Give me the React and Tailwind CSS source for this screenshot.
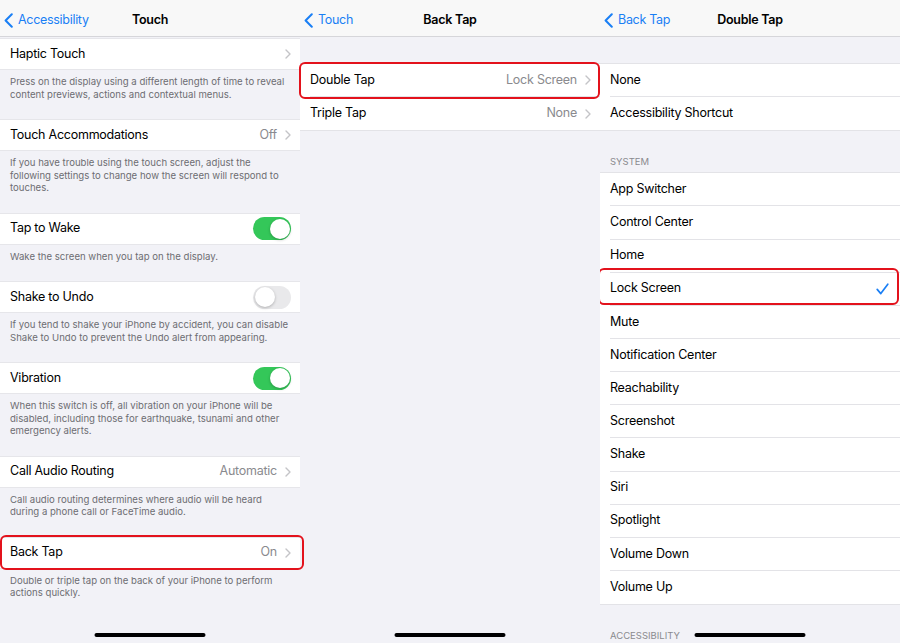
const blue = "text-[#1a7ff5]";
const label = "text-[12.5px] tracking-[-0.25px]";

function BackChevron() {
  return (
    <svg width="9" height="15" viewBox="0 0 9 15" fill="none" className="mr-[5px] shrink-0">
      <path d="M7.8 1.2 L1.6 7.5 L7.8 13.8" stroke="#1a7ff5" strokeWidth="2" strokeLinecap="round" strokeLinejoin="round" />
    </svg>
  );
}

function Chevron() {
  return (
    <svg width="6" height="10" viewBox="0 0 6 10" fill="none" className="shrink-0">
      <path d="M1 1 L5 5 L1 9" stroke="#c4c4c7" strokeWidth="1.4" strokeLinecap="round" strokeLinejoin="round" />
    </svg>
  );
}

function Check() {
  return (
    <svg width="13" height="12" viewBox="0 0 13 12" fill="none">
      <path d="M1.2 6.4 L4.8 10.6 L11.8 1.2" stroke="#1a7ff5" strokeWidth="1.7" strokeLinecap="round" strokeLinejoin="round" />
    </svg>
  );
}

function NavBar({ back, title }) {
  return (
    <div className="grid h-[37px] grid-cols-[1fr_auto_1fr] items-center border-b border-[#d6d6da] bg-[#f8f8f8] px-[4px] pt-[5px]">
      <div className={`flex items-center text-[12.5px] tracking-[-0.3px] ${blue}`}>
        <BackChevron />
        {back}
      </div>
      <div className="text-[12.5px] font-semibold tracking-[-0.25px] text-black">{title}</div>
      <div />
    </div>
  );
}

function Toggle({ on }) {
  return (
    <div
      className={
        on
          ? "flex h-[23px] w-[38px] items-center justify-end rounded-full bg-[#34c759] p-[1.5px]"
          : "flex h-[23px] w-[38px] items-center justify-start rounded-full bg-[#e9e9eb] p-[1.5px]"
      }
    >
      <div className="h-[20px] w-[20px] rounded-full bg-white shadow-[0_1px_3px_rgba(0,0,0,0.25)]" />
    </div>
  );
}

function RedBox({ className }) {
  return <div className={`pointer-events-none absolute z-10 rounded-[6px] border-2 border-[#e3121c] ${className}`} />;
}

function Footer({ children }) {
  return (
    <div className="pb-[18px] pl-[10px] pr-[9px] pt-[6px] text-[9.6px] leading-[12.5px] text-[#6d6d72]">{children}</div>
  );
}

function TouchRow({ label: text, value, toggle, chevron, box }) {
  return (
    <div className="relative flex h-[32px] items-center justify-between border-y border-[#e6e6ea] bg-white pl-[10px] pr-[9px]">
      <span className={`${label} text-black`}>{text}</span>
      {toggle !== undefined ? (
        <Toggle on={toggle} />
      ) : (
        <div className="flex items-center gap-[8px]">
          {value && <span className={`${label} text-[#8a8a8e]`}>{value}</span>}
          {chevron && <Chevron />}
        </div>
      )}
      {box && <RedBox className="-top-[3px] -bottom-[2px] left-0 -right-[4px]" />}
    </div>
  );
}

function HomeBar() {
  return <div className="absolute bottom-[6px] left-1/2 h-[4px] w-[111px] -translate-x-1/2 rounded-full bg-black" />;
}

function TouchPanel() {
  return (
    <div className="relative h-[643px] w-[300px] shrink-0 bg-[#f2f2f7]">
      <NavBar back="Accessibility" title="Touch" />
      <div className="pt-[1px]">
        <TouchRow label="Haptic Touch" chevron />
        <Footer>
          Press on the display using a different length of time to reveal content previews, actions and contextual menus.
        </Footer>
        <TouchRow label="Touch Accommodations" value="Off" chevron />
        <Footer>
          If you have trouble using the touch screen, adjust the following settings to change how the screen will respond to
          touches.
        </Footer>
        <TouchRow label="Tap to Wake" toggle={true} />
        <Footer>Wake the screen when you tap on the display.</Footer>
        <TouchRow label="Shake to Undo" toggle={false} />
        <Footer>
          If you tend to shake your iPhone by accident, you can disable Shake to Undo to prevent the Undo alert from appearing.
        </Footer>
        <TouchRow label="Vibration" toggle={true} />
        <Footer>
          When this switch is off, all vibration on your iPhone will be disabled, including those for earthquake, tsunami and
          other emergency alerts.
        </Footer>
        <TouchRow label="Call Audio Routing" value="Automatic" chevron />
        <Footer>Call audio routing determines where audio will be heard during a phone call or FaceTime audio.</Footer>
        <TouchRow label="Back Tap" value="On" chevron box />
        <Footer>Double or triple tap on the back of your iPhone to perform actions quickly.</Footer>
      </div>
      <HomeBar />
    </div>
  );
}

function ListRow({ label: text, value, chevron, check, last, box }) {
  return (
    <div className="relative flex h-[33.15px] items-stretch bg-white pl-[10px]">
      <div
        className={`flex flex-1 items-center justify-between pr-[9px] ${last ? "" : "border-b border-[#e3e3e7]"}`}
      >
        <span className={`${label} text-black`}>{text}</span>
        <div className="flex items-center gap-[8px]">
          {value && <span className={`${label} text-[#8a8a8e]`}>{value}</span>}
          {chevron && <Chevron />}
          {check && (
            <div className="pr-[2px]">
              <Check />
            </div>
          )}
        </div>
      </div>
      {box}
    </div>
  );
}

function Group({ children }) {
  return <div className="border-y border-[#e3e3e7]">{children}</div>;
}

function BackTapPanel() {
  return (
    <div className="relative h-[643px] w-[300px] shrink-0 bg-[#f2f2f7]">
      <NavBar back="Touch" title="Back Tap" />
      <div className="pt-[26px]">
        <Group>
          <ListRow
            label="Double Tap"
            value="Lock Screen"
            chevron
            box={<RedBox className="-top-[2px] -bottom-[2px] -left-[1px] right-0" />}
          />
          <ListRow label="Triple Tap" value="None" chevron last />
        </Group>
      </div>
      <HomeBar />
    </div>
  );
}

const systemActions = [
  "App Switcher",
  "Control Center",
  "Home",
  "Lock Screen",
  "Mute",
  "Notification Center",
  "Reachability",
  "Screenshot",
  "Shake",
  "Siri",
  "Spotlight",
  "Volume Down",
  "Volume Up",
];

function SectionHeader({ children }) {
  return <div className="px-[10px] pb-[5px] pt-[26px] text-[9.5px] leading-[10px] text-[#8a8a8e]">{children}</div>;
}

function DoubleTapPanel() {
  return (
    <div className="relative h-[643px] w-[300px] shrink-0 overflow-hidden bg-[#f2f2f7]">
      <NavBar back="Back Tap" title="Double Tap" />
      <div className="pt-[26px]">
        <Group>
          <ListRow label="None" />
          <ListRow label="Accessibility Shortcut" last />
        </Group>
        <SectionHeader>SYSTEM</SectionHeader>
        <Group>
          {systemActions.map((a, i) => (
            <ListRow
              key={a}
              label={a}
              check={a === "Lock Screen"}
              last={i === systemActions.length - 1}
              box={a === "Lock Screen" ? <RedBox className="-top-[5px] bottom-[1px] -left-[2px] right-[1px]" /> : null}
            />
          ))}
        </Group>
        <SectionHeader>ACCESSIBILITY</SectionHeader>
      </div>
      <HomeBar />
    </div>
  );
}

export default function App() {
  return (
    <div className="flex h-[643px] w-[900px] overflow-hidden bg-[#f2f2f7] font-['Inter',sans-serif] antialiased">
      <TouchPanel />
      <BackTapPanel />
      <DoubleTapPanel />
    </div>
  );
}
